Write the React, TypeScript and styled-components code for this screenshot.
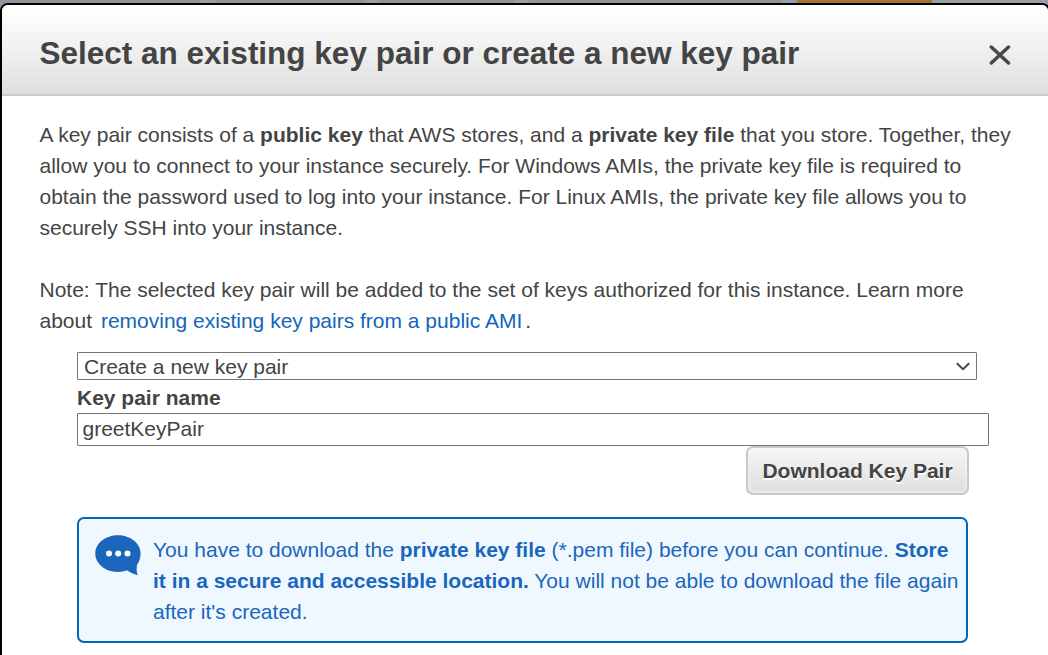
import React from "react";
import styled, { createGlobalStyle } from "styled-components";

const GlobalStyle = createGlobalStyle`
  * { box-sizing: border-box; }
  html, body { margin: 0; padding: 0; }
  body {
    width: 1048px;
    height: 655px;
    overflow: hidden;
    background: #91969e;
    color: #444;
    font: 21px/31px "Liberation Sans", Arial, sans-serif;
  }
  button, input { font-family: inherit; color: inherit; }
`;

const Page = styled.div`
  display: flex;
  flex-direction: column;
  width: 1048px;
  height: 655px;
  overflow: hidden;
`;

const Steps = styled.div`
  display: flex;
  flex: none;
  height: 3px;
`;

const Step = styled.div<{ $width: number; $color: string }>`
  width: ${(p) => p.$width}px;
  background: ${(p) => p.$color};
`;

const Dialog = styled.section`
  flex: 1;
  min-height: 0;
  width: 1050px;
  border: 2px solid #000;
  border-bottom: 0;
  border-radius: 8px 8px 0 0;
  background: #fff;
  overflow: hidden;
`;

const Header = styled.header`
  display: flex;
  align-items: center;
  justify-content: space-between;
  height: 91px;
  padding: 0 37.5px 0 37.5px;
  border-bottom: 2px solid #ccc;
  background: linear-gradient(#fff 5%, #f5f5f5 35%, #dfdfdf);
`;

const Title = styled.h1`
  margin: 6px 0 0;
  font-size: 31.5px;
  line-height: 40px;
  white-space: nowrap;
`;

const CloseButton = styled.button`
  display: flex;
  padding: 0;
  margin-top: 11px;
  border: 0;
  background: none;
`;

const Content = styled.div`
  padding: 23px 0 0 37.5px;
`;

const Paragraph = styled.p`
  margin: 0 0 31px;
`;

const Line = styled.span`
  display: block;
  white-space: pre;
`;

const Link = styled.a`
  margin: 0 3px;
  color: #1166bb;
`;

const Form = styled.div`
  display: flex;
  flex-direction: column;
  width: 912px;
  margin: -15px 0 0 37.5px;
`;

const Select = styled.div`
  display: flex;
  align-items: center;
  justify-content: space-between;
  width: 900px;
  height: 28px;
  padding: 0 6px;
  border: 1px solid #767676;
  border-radius: 1px;
`;

const Label = styled.label`
  height: 33px;
  padding-top: 2px;
  font-weight: bold;
`;

const Input = styled.input`
  width: 912px;
  height: 33px;
  padding: 0 5px 1px 4.5px;
  border: 1px solid #767676;
  border-radius: 1px;
  outline: 0;
  background: #fff;
  font-size: 21px;
`;

const DownloadButton = styled.button`
  align-self: flex-end;
  width: 223px;
  height: 49px;
  margin-right: 20px;
  padding: 0;
  border: 2px solid #c8c8c8;
  border-radius: 7px;
  background: linear-gradient(#f6f6f6, #dedede);
  box-shadow: inset 0 0 3px 1px #f4f4f4;
  font-size: 21px;
  font-weight: bold;
  text-shadow: 0 2px 0 #fff;
  white-space: nowrap;
`;

const Notice = styled.aside`
  display: flex;
  align-items: flex-start;
  width: 891px;
  height: 126px;
  margin-top: 22px;
  padding: 15px 0 0 16px;
  border: 2px solid #0067b8;
  border-radius: 7px;
  background: #f0f8ff;
  color: #1a66bd;
`;

const NoticeIcon = styled.svg`
  flex: none;
  margin-top: 1px;
`;

const NoticeText = styled.div`
  margin-left: 12px;
`;

const steps = [
  { width: 200, color: "#8f959c" },
  { width: 15, color: "#999da5" },
  { width: 149, color: "#8f959c" },
  { width: 15, color: "#999da5" },
  { width: 135, color: "#8f959c" },
  { width: 15, color: "#999da5" },
  { width: 253, color: "#8f959c" },
  { width: 15, color: "#999da5" },
  { width: 135, color: "#a37531" },
  { width: 116, color: "#999da5" },
];

const CloseIcon = () => (
  <svg width="22" height="21" viewBox="0 0 22 21" fill="none" stroke="#484848" strokeWidth="3.5" strokeLinecap="round">
    <path d="M2.3 2 19.5 18M19.5 2 2.3 18" />
  </svg>
);

const ChevronIcon = () => (
  <svg width="14" height="9" viewBox="0 0 14 9" fill="none" stroke="#444" strokeWidth="2">
    <path d="M.8 1.2 7 7.2l6.2-6" />
  </svg>
);

const SpeechIcon = () => (
  <NoticeIcon width="46" height="42" viewBox="0 0 46 42">
    <path
      fill="#1a66bd"
      d="M23 .2C10.4.2.3 8.3.3 18.5S10.4 36.900 22.5 36.900c3.500 0 6.600-.6 9.300-1.600 3.300 2.300 7 4 11 4.900-1.300-3-1.400-6.300-.8-10.300 2.200-3 3.600-7 3.600-11.400C45.600 8.300 35.500.2 23 .2Z"
    />
    <g fill="#fff">
      <circle cx="14" cy="18.6" r="3" />
      <circle cx="23.2" cy="18.6" r="3" />
      <circle cx="32.5" cy="18.6" r="3" />
    </g>
  </NoticeIcon>
);

export default function App() {
  return (
    <Page>
      <GlobalStyle />
      <Steps>
        {steps.map((s, i) => (
          <Step key={i} $width={s.width} $color={s.color} />
        ))}
      </Steps>
      <Dialog>
        <Header>
          <Title>Select an existing key pair or create a new key pair</Title>
          <CloseButton aria-label="Close"><CloseIcon /></CloseButton>
        </Header>
        <Content>
          <Paragraph>
            <Line>A key pair consists of a <b>public key</b> that AWS stores, and a <b>private key file</b> that you store. Together, they</Line>
            <Line>allow you to connect to your instance securely. For Windows AMIs, the private key file is required to</Line>
            <Line>obtain the password used to log into your instance. For Linux AMIs, the private key file allows you to</Line>
            <Line>securely SSH into your instance.</Line>
          </Paragraph>
          <Paragraph>
            <Line>Note: The selected key pair will be added to the set of keys authorized for this instance. Learn more</Line>
            <Line>about <Link>removing existing key pairs from a public AMI</Link>.</Line>
          </Paragraph>
          <Form>
            <Select><span>Create a new key pair</span><ChevronIcon /></Select>
            <Label htmlFor="key-name">Key pair name</Label>
            <Input id="key-name" defaultValue="greetKeyPair" />
            <DownloadButton>Download Key Pair</DownloadButton>
            <Notice>
              <SpeechIcon />
              <NoticeText>
                <Line>You have to download the <b>private key file</b> (*.pem file) before you can continue. <b>Store</b></Line>
                <Line><b>it in a secure and accessible location.</b> You will not be able to download the file again</Line>
                <Line>after it's created.</Line>
              </NoticeText>
            </Notice>
          </Form>
        </Content>
      </Dialog>
    </Page>
  );
}
